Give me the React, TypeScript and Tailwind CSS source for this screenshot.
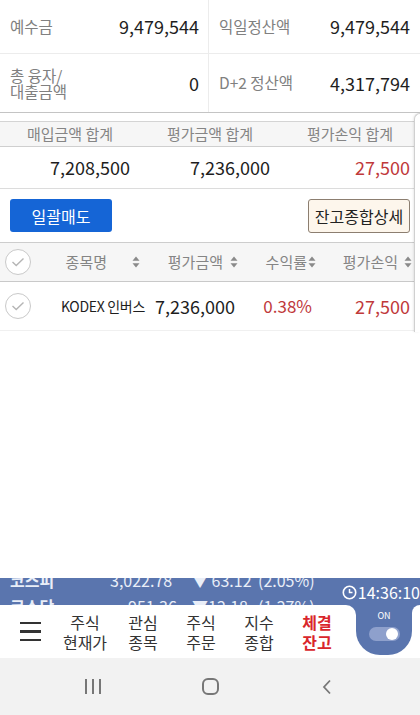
import React from "react";

const F = { fontFamily: '"Noto Sans CJK KR", "Noto Sans", sans-serif' };

function SortIcon() {
  return (
    <svg width="8" height="12" viewBox="0 0 8 12" className="shrink-0">
      <path d="M4 0.5 L7.5 4.8 H0.5 Z" fill="#8a8a8a" />
      <path d="M4 11.5 L7.5 7.2 H0.5 Z" fill="#8a8a8a" />
    </svg>
  );
}

function CheckCircle() {
  return (
    <div className="w-[26px] h-[26px] rounded-full border border-[#c9c9c9] flex items-center justify-center bg-white">
      <svg width="14" height="10" viewBox="0 0 14 10">
        <path d="M1.5 5 L5.2 8.5 L12.5 1.5" fill="none" stroke="#b5b5b5" strokeWidth="1.4" />
      </svg>
    </div>
  );
}

function NavItem({ a, b, active }: { a: string; b: string; active?: boolean }) {
  return (
    <div
      className={
        "w-[58px] flex flex-col items-center leading-[20px] text-[16px] " +
        (active ? "text-[#d9262b] font-bold" : "text-[#333]")
      }
    >
      <span>{a}</span>
      <span>{b}</span>
    </div>
  );
}

export default function App() {
  return (
    <div style={F} className="relative w-[420px] h-[715px] bg-white overflow-hidden flex flex-col">
      {/* top summary */}
      <div className="border-b border-[#c4c4c4]">
        <div className="flex h-[54px] border-b border-[#ececec]">
          <div className="w-[209px] flex items-center justify-between pl-[10px] pr-[9px] border-r border-[#ececec]">
            <span className="text-[15.5px] text-[#808080]">예수금</span>
            <span className="text-[18px] text-[#1e1e1e]">9,479,544</span>
          </div>
          <div className="flex-1 flex items-center justify-between pl-[10px] pr-[10px]">
            <span className="text-[15.5px] text-[#808080]">익일정산액</span>
            <span className="text-[18px] text-[#1e1e1e]">9,479,544</span>
          </div>
        </div>
        <div className="flex h-[58px]">
          <div className="w-[209px] flex items-center justify-between pl-[10px] pr-[9px] border-r border-[#ececec]">
            <span className="text-[15.5px] text-[#808080] leading-[16px] flex flex-col">
              <span>총 융자/</span>
              <span>대출금액</span>
            </span>
            <span className="text-[18px] text-[#1e1e1e]">0</span>
          </div>
          <div className="flex-1 flex items-center justify-between pl-[10px] pr-[10px]">
            <span className="text-[15.5px] text-[#808080]">D+2 정산액</span>
            <span className="text-[18px] text-[#1e1e1e]">4,317,794</span>
          </div>
        </div>
      </div>

      {/* totals */}
      <div className="mt-[8px] border-t border-[#d4d4d4]">
        <div className="grid grid-cols-3 h-[25px] bg-[#f6f6f6] border-b border-[#cfcfcf] text-[15px] text-[#858585]">
          <div className="flex items-center justify-center">매입금액 합계</div>
          <div className="flex items-center justify-center">평가금액 합계</div>
          <div className="flex items-center justify-center">평가손익 합계</div>
        </div>
        <div className="grid grid-cols-3 h-[42px] border-b border-[#dcdcdc] text-[18px]">
          <div className="flex items-center justify-end pr-[10px] text-[#1e1e1e]">7,208,500</div>
          <div className="flex items-center justify-end pr-[10px] text-[#1e1e1e]">7,236,000</div>
          <div className="flex items-center justify-end pr-[10px] text-[#c0393b]">27,500</div>
        </div>
      </div>

      {/* buttons */}
      <div className="flex items-center justify-between h-[53px] pl-[10px] pr-[10px]">
        <button className="w-[102px] h-[33px] rounded-[3px] bg-[#1565d6] text-white text-[16px]">일괄매도</button>
        <button className="w-[102px] h-[34px] rounded-[3px] bg-[#fdf6ec] border border-[#8c7e70] text-[#222] text-[16px]">
          잔고종합상세
        </button>
      </div>

      {/* table */}
      <div className="border-t border-[#cdcdcd]">
        <div className="flex h-[39px] bg-[#f6f6f6] border-b border-[#c9c9c9] text-[15px] text-[#858585]">
          <div className="w-[36px] flex items-center justify-center">
            <CheckCircle />
          </div>
          <div className="w-[112px] flex items-center justify-end gap-[25px] pr-[8px]">
            <span>종목명</span>
            <SortIcon />
          </div>
          <div className="w-[92px] flex items-center justify-end gap-[7px] pr-[2px]">
            <span>평가금액</span>
            <SortIcon />
          </div>
          <div className="w-[78px] flex items-center justify-end gap-[1px] pr-[2px]">
            <span>수익률</span>
            <SortIcon />
          </div>
          <div className="flex-1 flex items-center justify-end gap-[6px] pr-[8px]">
            <span>평가손익</span>
            <SortIcon />
          </div>
        </div>
        <div className="flex h-[49px] border-b border-[#f0f0f0]">
          <div className="w-[36px] flex items-center justify-center">
            <CheckCircle />
          </div>
          <div className="w-[112px] flex items-center justify-end pr-[3px] text-[14px] text-[#1e1e1e] tracking-[-0.3px]">
            KODEX 인버스
          </div>
          <div className="w-[92px] flex items-center justify-end pr-[5px] text-[18px] text-[#1e1e1e]">7,236,000</div>
          <div className="w-[78px] flex items-center justify-end pr-[6px] text-[17px] text-[#c0393b]">0.38%</div>
          <div className="flex-1 flex items-center justify-end pr-[10px] text-[18px] text-[#c0393b]">27,500</div>
        </div>
      </div>

      <div className="flex-1" />

      {/* ticker band + nav */}
      <div className="bg-[#5a75ae]">
        <div className="relative h-[27px] overflow-hidden text-[#e9eef8] text-[16px]">
          <div className="absolute left-0 right-0 top-[-10px] flex flex-col leading-[24px]">
            <div className="flex items-center h-[24px]">
              <span className="w-[110px] pl-[10px] font-bold">코스피</span>
              <span className="w-[82px]">3,022.78</span>
              <span className="w-[66px]">▼ 63.12</span>
              <span>(2.05%)</span>
            </div>
            <div className="flex items-center h-[24px] mt-[2px]">
              <span className="w-[128px] pl-[10px] font-bold">코스닥</span>
              <span className="w-[64px]">951.36</span>
              <span className="w-[66px]">▼12.18</span>
              <span>(1.27%)</span>
            </div>
          </div>
          <div className="absolute right-0 top-[3px] text-white text-[16px] leading-[22px] flex items-center">
            <svg width="15" height="15" viewBox="0 0 14 14" className="mr-[1px]">
              <circle cx="7" cy="7" r="5.8" fill="none" stroke="white" strokeWidth="1.5" />
              <path d="M7 3.8 V7 H9.8" fill="none" stroke="white" strokeWidth="1.4" />
            </svg>
            <span>14:36:10</span>
          </div>
        </div>
        <div className="flex h-[53px]">
          <div className="w-[356px] bg-white rounded-tr-[10px] flex items-center">
            <div className="w-[56px] flex flex-col items-start gap-[6px] pl-[20px]">
              <div className="w-[21px] h-[2.5px] bg-[#333]" />
              <div className="w-[21px] h-[2.5px] bg-[#333]" />
              <div className="w-[21px] h-[2.5px] bg-[#333]" />
            </div>
            <div className="flex">
              <NavItem a="주식" b="현재가" />
              <NavItem a="관심" b="종목" />
              <NavItem a="주식" b="주문" />
              <NavItem a="지수" b="종합" />
              <NavItem a="체결" b="잔고" active />
            </div>
          </div>
          <div className="w-[56px] bg-white">
            <div className="h-[50px] bg-[#5a75ae] rounded-b-[24px] flex flex-col items-center pt-[6px]">
              <span className="text-[9px] text-white leading-[10px]">ON</span>
              <div className="mt-[6px] w-[31px] h-[14px] rounded-full bg-[#8ea0cc] relative">
                <div className="absolute right-[2px] top-[1px] w-[12px] h-[12px] rounded-full bg-white" />
              </div>
            </div>
          </div>
          <div className="flex-1 bg-white rounded-tl-[8px]" />
        </div>
      </div>

      {/* system nav */}
      <div className="h-[57px] bg-[#f2f2f2] flex items-center">
        <div className="w-[186px] flex justify-center">
          <div className="flex gap-[5px]">
            <div className="w-[2px] h-[15px] bg-[#777]" />
            <div className="w-[2px] h-[15px] bg-[#777]" />
            <div className="w-[2px] h-[15px] bg-[#777]" />
          </div>
        </div>
        <div className="w-[48px] flex justify-center">
          <div className="w-[17px] h-[17px] rounded-[6px] border-[2px] border-[#777]" />
        </div>
        <div className="flex-1 flex justify-start pl-[88px]">
          <svg width="10" height="16" viewBox="0 0 10 16">
            <path d="M8 1.5 L2 8 L8 14.5" fill="none" stroke="#777" strokeWidth="1.8" />
          </svg>
        </div>
      </div>

      {/* right edge overlay panel */}
      <div className="absolute right-0 top-[113px] w-[6px] h-[219px] bg-white border-l border-t border-[#d0d0d0] rounded-tl-[6px] shadow-[-1px_0_2px_rgba(0,0,0,0.08)]" />
    </div>
  );
}
